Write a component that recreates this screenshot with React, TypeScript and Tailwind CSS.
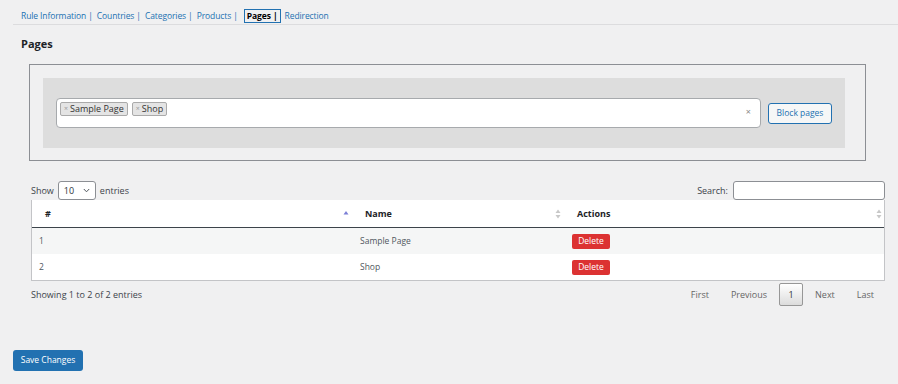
import React from 'react';

const tabs = ['Rule Information |', 'Countries |', 'Categories |', 'Products |', 'Pages |', 'Redirection'];

const rows = [
  { id: 1, name: 'Sample Page' },
  { id: 2, name: 'Shop' },
];

const SortBoth = () => (
  <svg width="6" height="10" viewBox="0 0 6 10" className="text-[#c8c8c8]">
    <path d="M3 0.5 L5.5 4 H0.5 Z" fill="currentColor" />
    <path d="M3 9.5 L5.5 6 H0.5 Z" fill="currentColor" />
  </svg>
);

const SortAsc = () => (
  <svg width="6" height="10" viewBox="0 0 6 10" className="text-[#7b7fd6]">
    <path d="M3 2 L5.5 5.5 H0.5 Z" fill="currentColor" />
  </svg>
);

const Tag = ({ label }: { label: string }) => (
  <span className="flex h-[14px] items-center gap-[2px] rounded-[2px] border border-[#aaa] bg-[#e4e4e4] px-[3px] text-[9px] text-[#333]">
    <span className="text-[7px] text-[#999]">×</span>
    {label}
  </span>
);

export default function App() {
  return (
    <div
      className="h-[384px] w-full overflow-hidden bg-[#f0f0f1] text-[#3c434a]"
      style={{ fontFamily: '"Open Sans", "Noto Sans", sans-serif' }}
    >
      <nav className="ml-[13px] flex items-center gap-[4px] border-b border-[#dcdcde] pl-[8px] pt-[9px] pb-[1px] text-[8.5px] tracking-[-0.1px]">
        {tabs.map((t) =>
          t === 'Pages |' ? (
            <span
              key={t}
              className="ml-[2px] flex h-[14px] items-center border border-[#2271b1] px-[2px] font-bold text-[#000]"
            >
              {t}
            </span>
          ) : (
            <span key={t} className="flex h-[14px] items-center text-[#2271b1]">
              {t}
            </span>
          )
        )}
      </nav>

      <h2 className="ml-[21px] mt-[12px] text-[11px] font-bold leading-[14px] text-[#1d2327]">Pages</h2>

      <div className="ml-[29px] mt-[13px] w-[837px] border border-[#8c8f94] pb-[12px] pl-[13px] pr-[20px] pt-[13px]">
        <div className="flex items-center gap-[7px] bg-[#dddddd] px-[13px] py-[20px]">
          <div className="relative flex h-[30px] flex-1 items-start gap-[4px] rounded-[4px] border border-[#a7aaad] bg-white px-[3px] pt-[3px]">
            <Tag label="Sample Page" />
            <Tag label="Shop" />
            <span className="absolute right-[9px] top-[6px] text-[9px] text-[#888]">×</span>
          </div>
          <button className="h-[21px] w-[64px] rounded-[3px] border border-[#2271b1] bg-[#f6f7f7] text-[8.5px] text-[#2271b1]">
            Block pages
          </button>
        </div>
      </div>

      <div className="ml-[31px] mt-[20px] w-[854px] text-[9px]">
        <div className="flex items-center justify-between">
          <div className="flex items-center gap-[4px] text-[#3c434a]">
            <span>Show</span>
            <span className="flex h-[19px] w-[38px] items-center justify-between rounded-[3px] border border-[#8c8f94] bg-white px-[5px] text-[#2c3338]">
              10
              <svg width="7" height="5" viewBox="0 0 7 5">
                <path d="M0.8 1 L3.5 3.8 L6.2 1" fill="none" stroke="#50575e" strokeWidth="1" />
              </svg>
            </span>
            <span>entries</span>
          </div>
          <div className="flex items-center gap-[5px]">
            <span>Search:</span>
            <span className="h-[19px] w-[152px] rounded-[3px] border border-[#8c8f94] bg-white" />
          </div>
        </div>

        <div className="border-x border-b border-[#c3c4c7] bg-white">
          <div className="grid h-[28px] grid-cols-[327px_212px_1fr] items-center border-b border-[#3c434a] font-bold text-[#1d2327]">
            <div className="flex items-center justify-between pl-[13px] pr-[10px]">
              #
              <SortAsc />
            </div>
            <div className="flex items-center justify-between pl-[6px] pr-[10px]">
              Name
              <SortBoth />
            </div>
            <div className="flex items-center justify-between pl-[6px] pr-[2px]">
              Actions
              <SortBoth />
            </div>
          </div>
          {rows.map((r, i) => (
            <div
              key={r.id}
              className={`grid h-[26px] grid-cols-[327px_212px_1fr] items-center text-[8.5px] text-[#50575e] ${
                i % 2 === 0 ? 'bg-[#f5f6f6]' : 'bg-white'
              }`}
            >
              <div className="pl-[7px]">{r.id}</div>
              <div className="pl-[1px]">{r.name}</div>
              <div className="pl-[1px]">
                <button className="h-[15px] w-[38px] rounded-[2px] bg-[#dc3232] text-[8.5px] text-white">Delete</button>
              </div>
            </div>
          ))}
        </div>

        <div className="mt-[2px] flex items-center justify-between">
          <span className="text-[#3c434a]">Showing 1 to 2 of 2 entries</span>
          <div className="flex items-center text-[#666]">
            <span className="px-[11px]">First</span>
            <span className="px-[11px]">Previous</span>
            <span className="mx-[1px] flex h-[23px] w-[24px] items-center justify-center rounded-[2px] border border-[#979797] bg-gradient-to-b from-white to-[#dcdcdc] text-[#333]">
              1
            </span>
            <span className="px-[11px]">Next</span>
            <span className="px-[11px]">Last</span>
          </div>
        </div>
      </div>

      <button className="ml-[13px] mt-[44px] h-[21px] w-[70px] rounded-[3px] bg-[#2271b1] text-[8.5px] text-white">
        Save Changes
      </button>
    </div>
  );
}
